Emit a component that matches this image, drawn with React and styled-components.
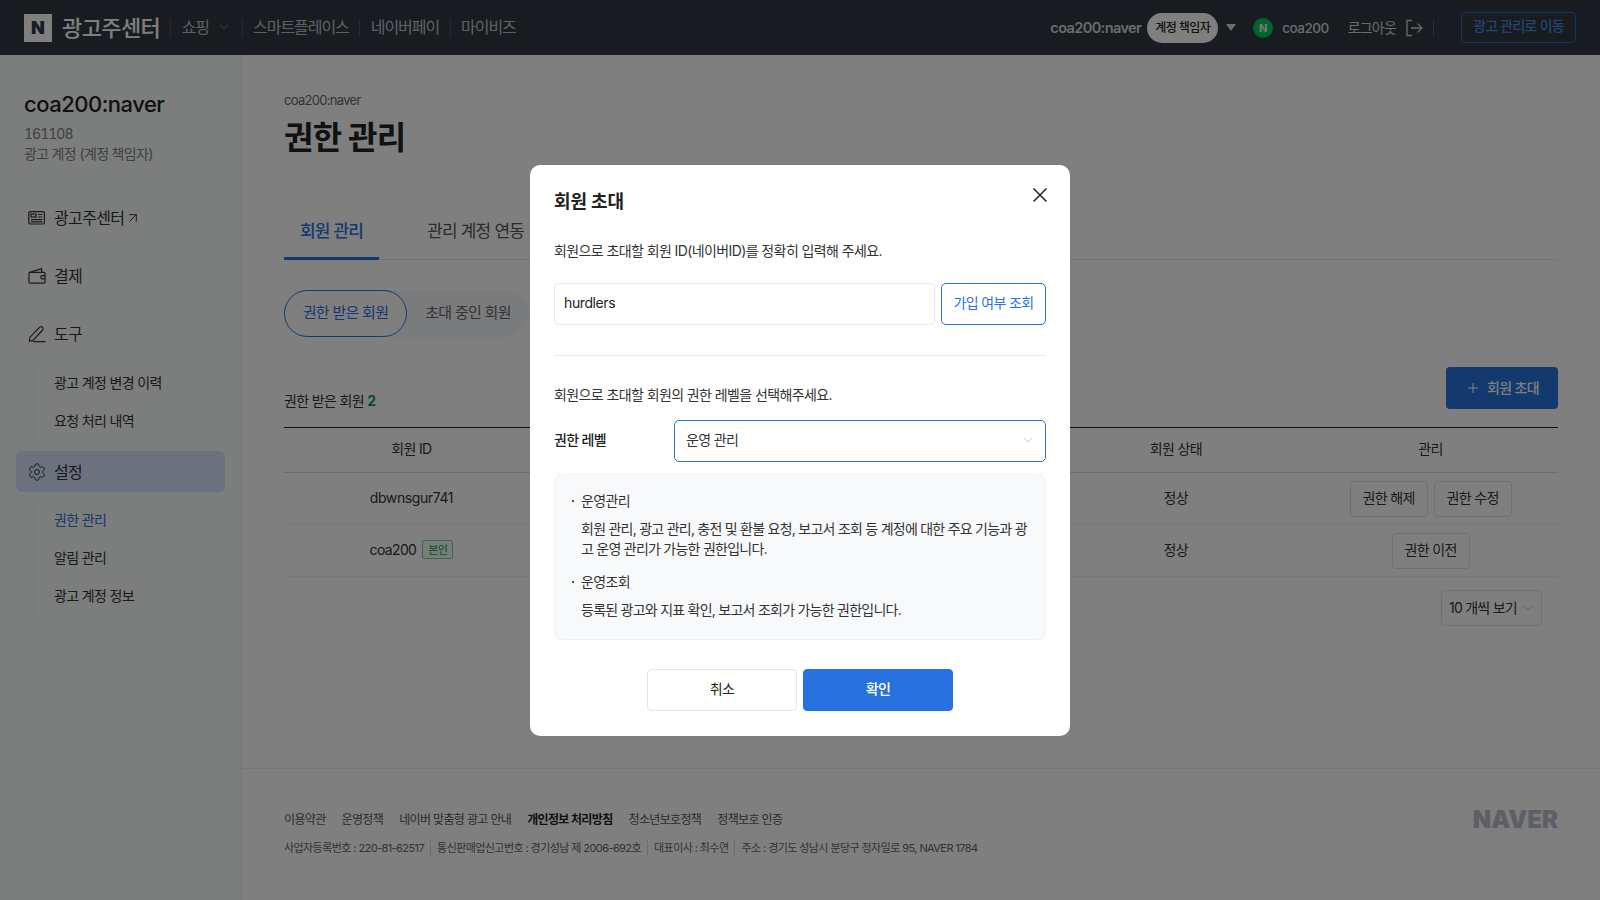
import React from "react";
import styled, { createGlobalStyle } from "styled-components";
import { Settings, Plus, ArrowUpRight, ChevronDown } from "lucide-react";

const GlobalStyle = createGlobalStyle`
  * { box-sizing: border-box; }
  html, body { margin: 0; padding: 0; height: 100%; }
  body {
    font-family: Inter, "Noto Sans CJK KR", sans-serif;
    color: #222;
    background: #fff;
    overflow: hidden;
    line-height: 20px;
    letter-spacing: -0.65px;
  }
`;

const Page = styled.div`
  width: 1600px;
  height: 900px;
  display: flex;
  flex-direction: column;
`;

const Header = styled.header`
  height: 55px;
  flex: none;
  background: #303840;
  display: flex;
  align-items: center;
  padding: 0 24px;
  color: #fff;
`;

const LogoBox = styled.div`
  width: 28px;
  height: 28px;
  background: #fff;
  color: #303840;
  display: flex;
  align-items: center;
  justify-content: center;
  font-weight: 900;
  font-size: 18px;
  letter-spacing: 0;
`;

const LogoText = styled.div`
  margin-left: 10px;
  font-size: 22px;
  line-height: 28px;
  font-weight: 500;
  letter-spacing: -0.6px;
`;

const TopNav = styled.nav`
  display: flex;
  align-items: center;
  margin-left: 10px;
`;

const TopLink = styled.div`
  display: flex;
  align-items: center;
  height: 18px;
  padding: 0 10.5px 2px;
  font-size: 16px;
  color: #bfc4c9;
  border-left: 1px solid #4a525a;
  letter-spacing: -1.05px;
  svg { margin-left: 8px; color: #8d9399; }
`;

const HeaderRight = styled.div`
  margin-left: auto;
  display: flex;
  align-items: center;
`;

const AccountName = styled.div`
  font-size: 14.5px;
  font-weight: 600;
  color: #d6d9dc;
  letter-spacing: -0.6px;
`;

const RoleBadge = styled.div`
  margin-left: 6px;
  height: 30px;
  width: 71px;
  border-radius: 15px;
  background: #fff;
  color: #222;
  font-size: 12px;
  font-weight: 500;
  display: flex;
  align-items: center;
  justify-content: center;
  letter-spacing: -0.6px;
`;

const Caret = styled.div`
  margin-left: 8px;
  width: 0;
  height: 0;
  border-left: 5px solid transparent;
  border-right: 5px solid transparent;
  border-top: 7px solid #d6d9dc;
`;

const UserDot = styled.div`
  margin-left: 17px;
  width: 20px;
  height: 20px;
  border-radius: 50%;
  background: #03c75a;
  color: #e9e9e9;
  font-size: 11px;
  font-weight: 800;
  letter-spacing: 0;
  display: flex;
  align-items: center;
  justify-content: center;
`;

const UserName = styled.div`
  margin-left: 9px;
  font-size: 13.5px;
  font-weight: 500;
  color: #d6d9dc;
  letter-spacing: -0.5px;
`;

const Logout = styled.div`
  margin-left: 19px;
  font-size: 14px;
  color: #d6d9dc;
  letter-spacing: -0.8px;
  display: flex;
  align-items: center;
  gap: 9px;
`;

const HeaderSep = styled.div`
  width: 1px;
  height: 18px;
  background: #59616a;
  margin: 0 27px 0 10px;
`;

const MoveButton = styled.div`
  width: 115px;
  height: 31px;
  padding-bottom: 3px;
  border: 1px solid #2772de;
  border-radius: 4px;
  color: #4d96f2;
  font-size: 14px;
  font-weight: 500;
  letter-spacing: -0.75px;
  display: flex;
  align-items: center;
  justify-content: center;
  opacity: 0.85;
`;

const Body = styled.div`
  flex: 1;
  display: flex;
  min-height: 0;
`;

const Sidebar = styled.aside`
  width: 242px;
  flex: none;
  background: #f8fafa;
  border-right: 1px solid #e6e8ea;
  padding-top: 34px;
`;

const SideAccount = styled.div`
  padding: 0 24px;
  margin-bottom: 33px;
`;

const SideName = styled.div`
  font-size: 22px;
  line-height: 30px;
  font-weight: 500;
  color: #222;
  letter-spacing: -0.5px;
  margin-bottom: 5px;
`;

const SideMeta = styled.div`
  font-size: 14px;
  line-height: 20px;
  color: #7b8086;
  font-variant-numeric: tabular-nums;
  letter-spacing: ${(props) => (props.$digits ? "-1px" : "-0.65px")};
`;

const NavGroup = styled.div`
  margin: ${(props) => (props.$pull ? "-5px" : "0")} 16px 16px;
`;

const NavItem = styled.div`
  height: ${(props) => (props.$active ? "41px" : "42px")};
  display: flex;
  align-items: center;
  gap: 8px;
  padding-left: 12px;
  border-radius: 6px;
  font-size: 16px;
  color: #333;
  background: ${(props) => (props.$active ? "#d6e5fb" : "transparent")};
  svg { flex: none; }
`;

const SubList = styled.div`
  margin: 9px 0 0 17px;
  border-left: 1px solid #eef0f2;
  padding-left: 20px;
`;

const SubItem = styled.div`
  height: 38px;
  display: flex;
  align-items: center;
  font-size: 14px;
  color: ${(props) => (props.$active ? "#2772de" : "#333")};
`;

const Main = styled.main`
  flex: 1;
  display: flex;
  flex-direction: column;
  min-width: 0;
`;

const Content = styled.div`
  padding: 36px 42px 0;
`;

const Crumb = styled.div`
  font-size: 13px;
  line-height: 18px;
  color: #666;
  letter-spacing: -0.7px;
  margin-bottom: 7px;
`;

const Title = styled.h1`
  margin: 0;
  font-size: 32px;
  line-height: 44px;
  font-weight: 700;
  color: #222;
  letter-spacing: -0.8px;
`;

const Tabs = styled.div`
  margin-top: 47px;
  display: flex;
  gap: 32px;
  border-bottom: 1px solid #e8eaec;
`;

const Tab = styled.div`
  height: 53px;
  padding: 0 16px 2px;
  display: flex;
  align-items: center;
  font-size: 17px;
  font-weight: ${(props) => (props.$active ? 500 : 400)};
  color: ${(props) => (props.$active ? "#2772de" : "#555")};
  letter-spacing: -0.8px;
  border-bottom: 3px solid ${(props) => (props.$active ? "#2772de" : "transparent")};
  margin-bottom: -1px;
`;

const PillGroup = styled.div`
  margin-top: 30px;
  display: inline-flex;
  height: 47px;
  border-radius: 24px;
  background: #f4f6f8;
`;

const Pill = styled.div`
  width: ${(props) => (props.$active ? "123px" : "122px")};
  display: flex;
  align-items: center;
  justify-content: center;
  padding-bottom: 1px;
  border-radius: 24px;
  font-size: 15px;
  letter-spacing: -0.7px;
  color: ${(props) => (props.$active ? "#2772de" : "#666")};
  border: 1px solid ${(props) => (props.$active ? "#2772de" : "transparent")};
  background: ${(props) => (props.$active ? "#fff" : "transparent")};
`;

const CountRow = styled.div`
  margin-top: 30px;
  display: flex;
  justify-content: space-between;
  align-items: flex-end;
`;

const Count = styled.div`
  font-size: 14px;
  line-height: 20px;
  color: #333;
  margin-bottom: -2px;
  b { color: #03a14c; font-weight: 700; }
`;

const InviteButton = styled.div`
  width: 112px;
  height: 42px;
  background: #2772de;
  border-radius: 4px;
  color: #fff;
  font-size: 14px;
  font-weight: 500;
  display: flex;
  align-items: center;
  justify-content: center;
  gap: 6px;
`;

const Table = styled.div`
  margin-top: 18px;
  border-top: 1px solid #222;
`;

const Row = styled.div`
  display: grid;
  grid-template-columns: repeat(5, 1fr);
  height: ${(props) => (props.$head ? "45px" : "52px")};
  border-bottom: 1px solid ${(props) => (props.$head ? "#d8dadc" : "#eef0f2")};
  font-size: 14px;
  color: #333;
`;

const Cell = styled.div`
  display: flex;
  align-items: center;
  justify-content: center;
  gap: 6px;
  padding-bottom: ${(props) => (props.$lift ? "2px" : "0")};
  letter-spacing: ${(props) => (props.$latin ? "-0.4px" : "inherit")};
`;

const SelfTag = styled.span`
  border: 1px solid #7fcfa2;
  border-radius: 2px;
  background: #effaf3;
  color: #03a14c;
  font-size: 11px;
  padding: 0;
  width: 31px;
  height: 19px;
  display: inline-flex;
  align-items: center;
  justify-content: center;
`;

const GhostButton = styled.div`
  width: 78px;
  height: 36px;
  padding-bottom: 1px;
  border: 1px solid #dfe1e4;
  border-radius: 4px;
  background: #fff;
  display: flex;
  align-items: center;
  justify-content: center;
  font-size: 14px;
  color: #333;
`;

const PerPageRow = styled.div`
  margin-top: 13px;
  padding-right: 16px;
  display: flex;
  justify-content: flex-end;
`;

const PerPage = styled.div`
  width: 101px;
  height: 36px;
  border: 1px solid #dfe1e4;
  border-radius: 4px;
  background: #fff;
  padding: 0 4px 0 7px;
  display: flex;
  align-items: center;
  justify-content: space-between;
  font-size: 14px;
  letter-spacing: -0.75px;
  color: #333;
  svg { color: #aaa; }
`;

const Footer = styled.footer`
  margin-top: auto;
  height: 132px;
  border-top: 1px solid #e8eaec;
  padding: 42px 42px 0;
  display: flex;
  justify-content: space-between;
`;

const FooterLinks = styled.div`
  display: flex;
  gap: 16px;
  font-size: 12px;
  line-height: 18px;
  color: #555;
`;

const FooterLink = styled.span`
  font-weight: ${(props) => (props.$bold ? 700 : 400)};
  color: ${(props) => (props.$bold ? "#222" : "#555")};
`;

const BizLine = styled.div`
  margin-top: 10px;
  display: flex;
  font-size: 11px;
  line-height: 18px;
  letter-spacing: -0.58px;
  color: #666;
  span + span {
    margin-left: 6px;
    padding-left: 6px;
    border-left: 1px solid #ddd;
  }
`;

const NaverMark = styled.div`
  font-family: Inter, sans-serif;
  font-size: 24px;
  line-height: 18px;
  font-weight: 900;
  letter-spacing: 0;
  color: #b9c0cc;
`;

const Overlay = styled.div`
  position: fixed;
  inset: 0;
  background: rgba(0, 0, 0, 0.5);
  display: flex;
  align-items: center;
  justify-content: center;
`;

const Modal = styled.div`
  position: relative;
  width: 540px;
  height: 571px;
  background: #fff;
  border-radius: 10px;
  padding: 24px;
  display: flex;
  flex-direction: column;
`;

const CloseButton = styled.div`
  position: absolute;
  top: 20px;
  right: 20px;
  width: 20px;
  height: 20px;
  color: #222;
`;

const ModalTitle = styled.h2`
  margin: 0;
  font-size: 18px;
  line-height: 26px;
  font-weight: 700;
  letter-spacing: -0.1px;
  color: #222;
`;

const ModalText = styled.p`
  margin: ${(props) => props.$top} 0 0;
  font-size: 14px;
  line-height: 20px;
  letter-spacing: -0.6px;
  color: #333;
`;

const InputRow = styled.div`
  margin-top: 22px;
  display: flex;
  gap: 6px;
`;

const TextInput = styled.div`
  flex: 1;
  height: 42px;
  border: 1px solid #e8eaec;
  border-radius: 5px;
  padding: 0 9px 1px;
  display: flex;
  align-items: center;
  font-size: 14px;
  letter-spacing: -0.4px;
  color: #222;
`;

const CheckButton = styled.div`
  width: 105px;
  height: 42px;
  padding-bottom: 1px;
  border: 1px solid #2772de;
  border-radius: 5px;
  color: #2772de;
  font-size: 14px;
  display: flex;
  align-items: center;
  justify-content: center;
`;

const Divider = styled.div`
  margin-top: 30px;
  height: 1px;
  background: #e8eaec;
`;

const LevelRow = styled.div`
  margin-top: 15px;
  display: flex;
  align-items: center;
`;

const LevelLabel = styled.div`
  width: 120px;
  padding-bottom: 1px;
  font-size: 14px;
  font-weight: 500;
  color: #222;
`;

const LevelSelect = styled.div`
  flex: 1;
  height: 42px;
  border: 1px solid #2772de;
  border-radius: 5px;
  padding: 0 9px 1px 11px;
  display: flex;
  align-items: center;
  justify-content: space-between;
  font-size: 14px;
  color: #333;
  svg { color: #b5b8bc; }
`;

const InfoBox = styled.div`
  margin-top: 12px;
  height: 166px;
  background: #f8f9fb;
  border: 1px solid #eef0f2;
  border-radius: 8px;
  padding: 16px 12px 0 17px;
`;

const InfoHead = styled.div`
  display: flex;
  align-items: center;
  gap: 7px;
  margin-top: ${(props) => props.$top};
  font-size: 14px;
  line-height: 20px;
  color: #333;
  &::before {
    content: "";
    width: 2px;
    height: 2px;
    background: #555;
  }
`;

const InfoText = styled.div`
  margin: 8px 0 0 9px;
  font-size: 14px;
  line-height: 20.5px;
  letter-spacing: -0.75px;
  color: #333;
  word-break: break-all;
`;

const ModalButtons = styled.div`
  margin-top: 29px;
  display: flex;
  justify-content: center;
  gap: 6px;
`;

const ModalButton = styled.div`
  width: 150px;
  height: 42px;
  padding-bottom: 2px;
  border-radius: 4px;
  border: 1px solid ${(props) => (props.$primary ? "#2772de" : "#e3e5e8")};
  background: ${(props) => (props.$primary ? "#2772de" : "#fff")};
  color: ${(props) => (props.$primary ? "#fff" : "#222")};
  font-size: 14px;
  font-weight: ${(props) => (props.$primary ? 500 : 400)};
  display: flex;
  align-items: center;
  justify-content: center;
`;

function AdIcon() {
  return (
    <svg width="18" height="18" viewBox="0 0 18 18" fill="none" stroke="#333" strokeWidth="1.2">
      <rect x="0.8" y="2.6" width="15.6" height="12.4" rx="1.6" />
      <rect x="3" y="5" width="5" height="3" />
      <path d="M10 5.5h4.4M10 8h4.4M3 10.6h11.4M3 12.8h11.4" />
    </svg>
  );
}

function WalletIcon() {
  return (
    <svg width="18" height="18" viewBox="0 0 18 18" fill="none" stroke="#333" strokeWidth="1.2" strokeLinejoin="round">
      <path d="M1 5.6 13.6 1.6v4" />
      <rect x="1" y="5.4" width="16" height="10.8" rx="1.2" />
      <path d="M17 8.6h-2.6a1.6 1.6 0 0 0 0 3.2H17" />
    </svg>
  );
}

function PenIcon() {
  return (
    <svg width="18" height="18" viewBox="0 0 18 18" fill="none" stroke="#333" strokeWidth="1.2" strokeLinejoin="round" strokeLinecap="round">
      <path d="M1.2 16.4 2 12.2 11.8 2.2a1.8 1.8 0 0 1 2.6 0l.2.2a1.8 1.8 0 0 1 0 2.6L5 15.4z" />
      <path d="M5.4 16.6h11.6" />
    </svg>
  );
}

function LogoutIcon() {
  return (
    <svg width="18" height="18" viewBox="0 0 18 18" fill="none" stroke="#d6d9dc" strokeWidth="1.3">
      <path d="M7 1.5H2v15h5" />
      <path d="M6 9h11M12.6 4.6 17 9l-4.4 4.4" />
    </svg>
  );
}

function CloseIcon() {
  return (
    <svg width="20" height="20" viewBox="0 0 20 20" fill="none" stroke="currentColor" strokeWidth="1.5">
      <path d="M3.5 3.5l13 13M16.5 3.5l-13 13" />
    </svg>
  );
}

export default function App() {
  return (
    <Page>
      <GlobalStyle />
      <Header>
        <LogoBox>N</LogoBox>
        <LogoText>광고주센터</LogoText>
        <TopNav>
          <TopLink>
            쇼핑
            <ChevronDown size={14} strokeWidth={1.4} />
          </TopLink>
          <TopLink>스마트플레이스</TopLink>
          <TopLink>네이버페이</TopLink>
          <TopLink>마이비즈</TopLink>
        </TopNav>
        <HeaderRight>
          <AccountName>coa200:naver</AccountName>
          <RoleBadge>계정 책임자</RoleBadge>
          <Caret />
          <UserDot>N</UserDot>
          <UserName>coa200</UserName>
          <Logout>
            로그아웃
            <LogoutIcon />
          </Logout>
          <HeaderSep />
          <MoveButton>광고 관리로 이동</MoveButton>
        </HeaderRight>
      </Header>
      <Body>
        <Sidebar>
          <SideAccount>
            <SideName>coa200:naver</SideName>
            <SideMeta $digits>161108</SideMeta>
            <SideMeta>광고 계정 (계정 책임자)</SideMeta>
          </SideAccount>
          <NavGroup>
            <NavItem>
              <AdIcon />
              광고주센터
              <ArrowUpRight size={16} strokeWidth={1.4} style={{ marginLeft: -7 }} />
            </NavItem>
          </NavGroup>
          <NavGroup>
            <NavItem>
              <WalletIcon />
              결제
            </NavItem>
          </NavGroup>
          <NavGroup>
            <NavItem>
              <PenIcon />
              도구
            </NavItem>
            <SubList>
              <SubItem>광고 계정 변경 이력</SubItem>
              <SubItem>요청 처리 내역</SubItem>
            </SubList>
          </NavGroup>
          <NavGroup $pull>
            <NavItem $active>
              <Settings size={20} strokeWidth={1.15} color="#333" style={{ margin: "0 -1px" }} />
              설정
            </NavItem>
            <SubList>
              <SubItem $active>권한 관리</SubItem>
              <SubItem>알림 관리</SubItem>
              <SubItem>광고 계정 정보</SubItem>
            </SubList>
          </NavGroup>
        </Sidebar>
        <Main>
          <Content>
            <Crumb>coa200:naver</Crumb>
            <Title>권한 관리</Title>
            <Tabs>
              <Tab $active>회원 관리</Tab>
              <Tab>관리 계정 연동</Tab>
            </Tabs>
            <PillGroup>
              <Pill $active>권한 받은 회원</Pill>
              <Pill>초대 중인 회원</Pill>
            </PillGroup>
            <CountRow>
              <Count>
                권한 받은 회원 <b>2</b>
              </Count>
              <InviteButton>
                <Plus size={16} strokeWidth={1.5} />
                회원 초대
              </InviteButton>
            </CountRow>
            <Table>
              <Row $head>
                <Cell $lift>회원 ID</Cell>
                <Cell />
                <Cell />
                <Cell $lift>회원 상태</Cell>
                <Cell $lift>관리</Cell>
              </Row>
              <Row>
                <Cell $lift $latin>dbwnsgur741</Cell>
                <Cell />
                <Cell />
                <Cell $lift>정상</Cell>
                <Cell>
                  <GhostButton>권한 해제</GhostButton>
                  <GhostButton>권한 수정</GhostButton>
                </Cell>
              </Row>
              <Row>
                <Cell $lift>
                  coa200 <SelfTag>본인</SelfTag>
                </Cell>
                <Cell />
                <Cell />
                <Cell $lift>정상</Cell>
                <Cell>
                  <GhostButton>권한 이전</GhostButton>
                </Cell>
              </Row>
            </Table>
            <PerPageRow>
              <PerPage>
                10 개씩 보기
                <ChevronDown size={18} strokeWidth={1.1} />
              </PerPage>
            </PerPageRow>
          </Content>
          <Footer>
            <div>
              <FooterLinks>
                <FooterLink>이용약관</FooterLink>
                <FooterLink>운영정책</FooterLink>
                <FooterLink>네이버 맞춤형 광고 안내</FooterLink>
                <FooterLink $bold>개인정보 처리방침</FooterLink>
                <FooterLink>청소년보호정책</FooterLink>
                <FooterLink>정책보호 인증</FooterLink>
              </FooterLinks>
              <BizLine>
                <span>사업자등록번호 : 220-81-62517</span>
                <span>통신판매업신고번호 : 경기성남 제 2006-692호</span>
                <span>대표이사 : 최수연</span>
                <span>주소 : 경기도 성남시 분당구 정자일로 95, NAVER 1784</span>
              </BizLine>
            </div>
            <NaverMark>NAVER</NaverMark>
          </Footer>
        </Main>
      </Body>
      <Overlay>
        <Modal>
          <CloseButton>
            <CloseIcon />
          </CloseButton>
          <ModalTitle>회원 초대</ModalTitle>
          <ModalText $top="26px">회원으로 초대할 회원 ID(네이버ID)를 정확히 입력해 주세요.</ModalText>
          <InputRow>
            <TextInput>hurdlers</TextInput>
            <CheckButton>가입 여부 조회</CheckButton>
          </InputRow>
          <Divider />
          <ModalText $top="29px">회원으로 초대할 회원의 권한 레벨을 선택해주세요.</ModalText>
          <LevelRow>
            <LevelLabel>권한 레벨</LevelLabel>
            <LevelSelect>
              운영 관리
              <ChevronDown size={16} strokeWidth={1.2} />
            </LevelSelect>
          </LevelRow>
          <InfoBox>
            <InfoHead>운영관리</InfoHead>
            <InfoText>
              회원 관리, 광고 관리, 충전 및 환불 요청, 보고서 조회 등 계정에 대한 주요 기능과 광고 운영 관리가 가능한 권한입니다.
            </InfoText>
            <InfoHead $top="12px">운영조회</InfoHead>
            <InfoText>등록된 광고와 지표 확인, 보고서 조회가 가능한 권한입니다.</InfoText>
          </InfoBox>
          <ModalButtons>
            <ModalButton>취소</ModalButton>
            <ModalButton $primary>확인</ModalButton>
          </ModalButtons>
        </Modal>
      </Overlay>
    </Page>
  );
}
